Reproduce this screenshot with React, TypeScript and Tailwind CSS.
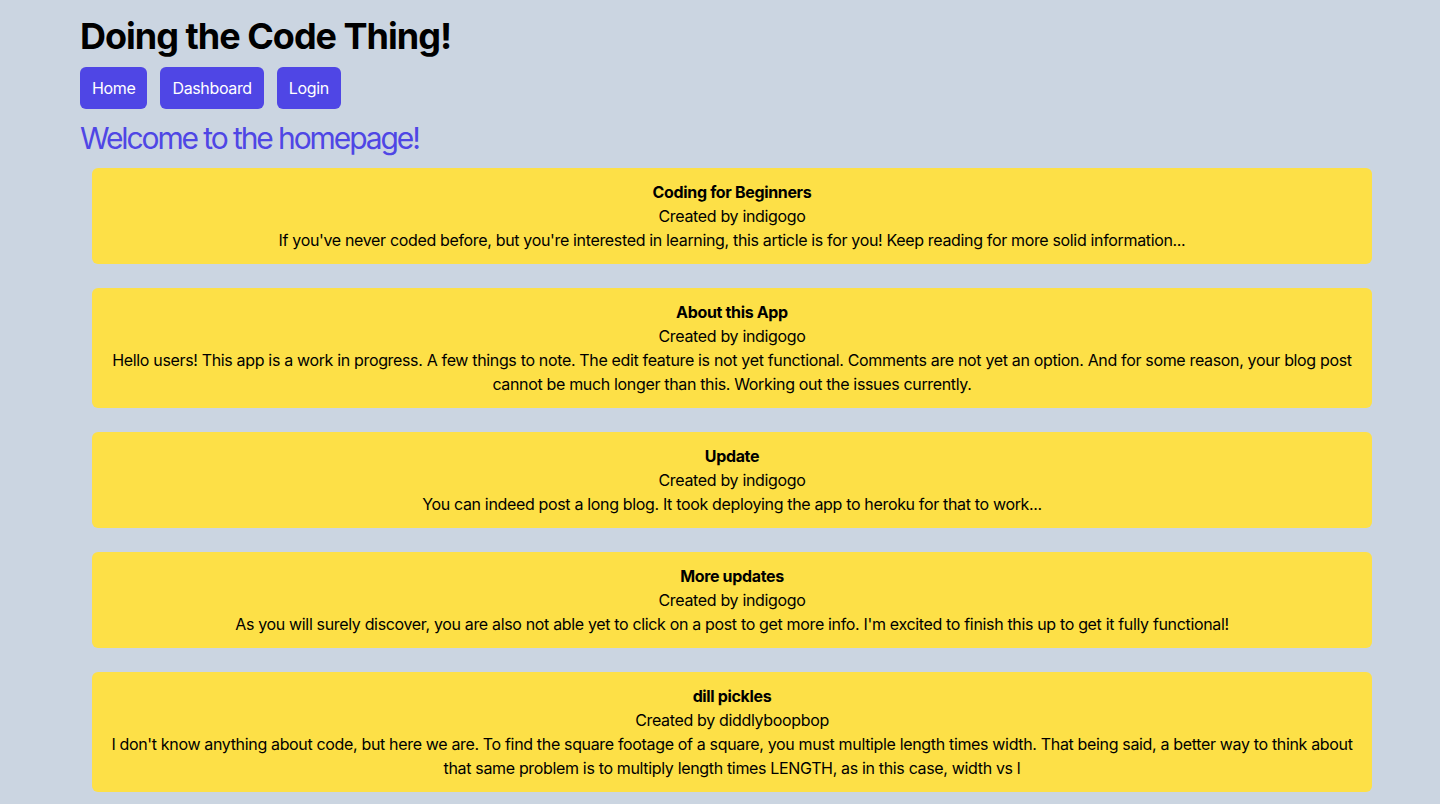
import React from "react";

const posts = [
  {
    title: "Coding for Beginners",
    author: "indigogo",
    body: "If you've never coded before, but you're interested in learning, this article is for you! Keep reading for more solid information...",
  },
  {
    title: "About this App",
    author: "indigogo",
    body: "Hello users! This app is a work in progress. A few things to note. The edit feature is not yet functional. Comments are not yet an option. And for some reason, your blog post cannot be much longer than this. Working out the issues currently.",
  },
  {
    title: "Update",
    author: "indigogo",
    body: "You can indeed post a long blog. It took deploying the app to heroku for that to work...",
  },
  {
    title: "More updates",
    author: "indigogo",
    body: "As you will surely discover, you are also not able yet to click on a post to get more info. I'm excited to finish this up to get it fully functional!",
  },
  {
    title: "dill pickles",
    author: "diddlyboopbop",
    body: "I don't know anything about code, but here we are. To find the square footage of a square, you must multiple length times width. That being said, a better way to think about that same problem is to multiply length times LENGTH, as in this case, width vs l",
  },
];

export default function App() {
  return (
    <div
      className="min-h-screen bg-[#cbd5e1] text-black"
      style={{ fontFamily: "Inter, 'Noto Sans', sans-serif" }}
    >
      <div className="mx-auto max-w-7xl pt-[16px]">
        <h1 className="text-4xl font-bold leading-10 tracking-[-1px]">Doing the Code Thing!</h1>
        <nav className="mt-[11px] flex gap-[13px]">
          {["Home", "Dashboard", "Login"].map((l) => (
            <a
              key={l}
              className="rounded-md bg-[#4f46e5] px-3 py-[9px] text-base leading-6 tracking-[-0.35px] text-white"
            >
              {l}
            </a>
          ))}
        </nav>
        <h2 className="mt-[11px] text-3xl font-normal leading-9 tracking-[-2.1px] text-[#4f46e5]">
          Welcome to the homepage!
        </h2>
        <div className="flex flex-col">
          {posts.map((p) => (
            <div
              key={p.title}
              className="m-3 w-full rounded-md bg-[#fde047] p-3 text-center text-base leading-6 tracking-[-0.34px]"
            >
              <div className="font-bold">{p.title}</div>
              <div>Created by {p.author}</div>
              <div>{p.body}</div>
            </div>
          ))}
        </div>
      </div>
    </div>
  );
}
